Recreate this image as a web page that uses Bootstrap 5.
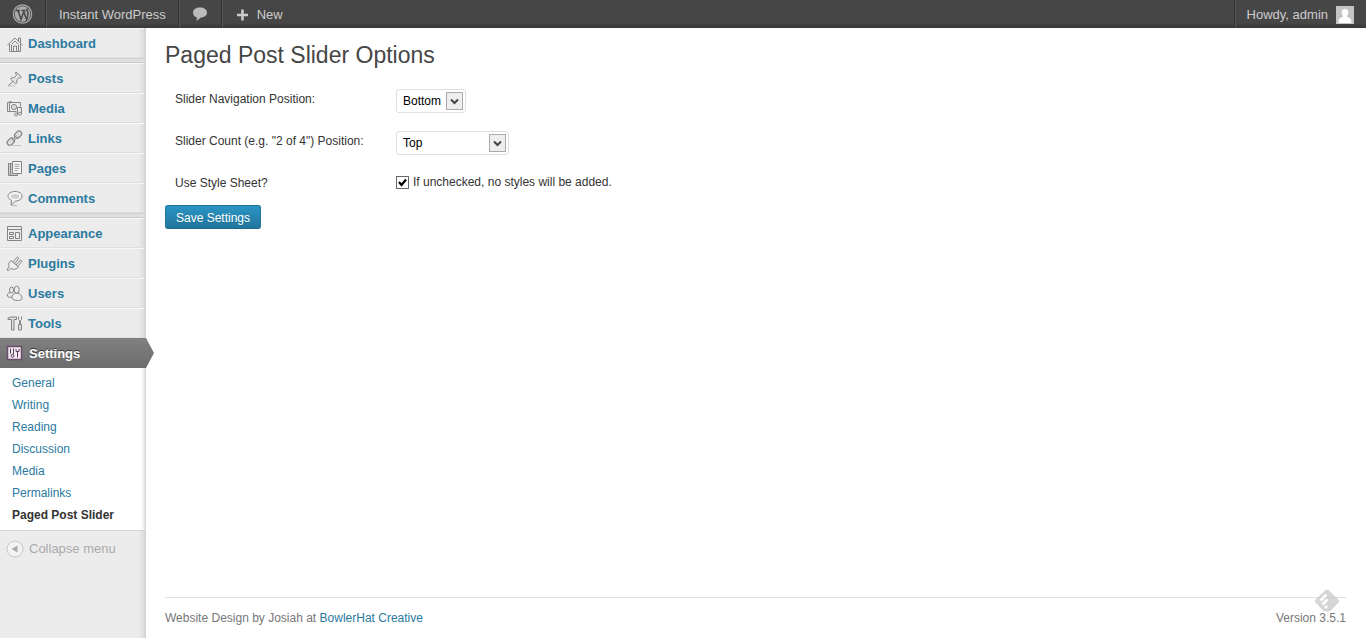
<!DOCTYPE html>
<html lang="en">
<head>
<meta charset="utf-8">
<meta name="viewport" content="width=device-width, initial-scale=1">
<title>Paged Post Slider Options</title>
<link href="https://cdn.jsdelivr.net/npm/bootstrap@5.3.0/dist/css/bootstrap.min.css" rel="stylesheet">
<style>
body { font-family: "Liberation Sans", Arial, sans-serif; font-size: 12px; line-height: 18px; color: #333; background: #fff; }
a { color: #2b7aa0; text-decoration: none; }
.admin-bar { height: 28px; font-size: 13px; line-height: 28px; background: linear-gradient(to top, #373737, #464646 5px); }
.admin-bar a { color: #ccc; height: 28px; padding: 1px 12px 0; border-right: 1px solid #333; box-shadow: 1px 0 #555; }
.admin-bar .bar-logo { width: 46px; padding-top: 0; }
.admin-bar .bar-talk { width: 42px; padding-top: 0; }
.admin-bar .bar-talk, .admin-bar .bar-site { margin-left: 1px; }
.admin-bar .bar-new { border: 0; box-shadow: none; margin-left: 2px; }
.admin-bar .bar-user { border: 0; border-left: 1px solid #333; box-shadow: inset 1px 0 #555; }
.side { width: 146px; background: linear-gradient(to left, #d0d0d0, #e0e0e0 3px, #ececec 8px); }
.menu-item { height: 30px; padding: 2px 0 0 6px; gap: 4px; font-size: 13px; font-weight: bold; border-top: 1px solid #f7f7f7; border-bottom: 1px solid #dfdfdf; margin-right: 2px; }
.menu-item svg { width: 18px; height: 18px; fill: none; stroke: #858585; stroke-width: 1; }
.menu-gap { height: 5px; background: #dfdfdf; border-top: 1px solid #d0d0d0; border-bottom: 1px solid #ccc; margin-right: 1px; }
.menu-item.current { position: relative; color: #fff; background: linear-gradient(#808080, #6d6d6d); border-color: #808080 #808080 #6d6d6d; border-bottom-color: #6d6d6d; text-shadow: 0 -1px 0 #333; gap: 5px; margin-right: 0; }
.menu-item.current::after { content: ""; position: absolute; left: 100%; top: -1px; width: 8px; height: 30px; background: linear-gradient(#808080, #6d6d6d); clip-path: polygon(0 0, 100% 50%, 0 100%); }
.submenu { padding: 4px 0; background: linear-gradient(to left, #d0d0d0, #ececec 2px, #fff 5px); border-bottom: 1px solid #d4d4d4; }
.submenu a { display: block; padding: 0 12px; line-height: 22px; }
.submenu a.active { color: #333; font-weight: bold; }
.collapse-btn { border: 0; background: none; color: #aaa; padding: 9px 6px; gap: 5px; font-size: 13px; }
main { padding: 0 20px 0 19px; }
h1 { font-size: 23px; line-height: 29px; font-weight: normal; color: #464646; padding-top: 13px; margin-bottom: 11px; }
.field-label { width: 231px; padding: 5px 10px; }
.field { min-height: 42px; }
.field:last-of-type { min-height: 40px; }
.drop { appearance: none; height: 24px; padding: 0 24px 0 6px; font-size: 12px; color: #000; border: 1px solid #dfdfdf; border-radius: 3px; background: #fff url("data:image/svg+xml,%3Csvg xmlns='http://www.w3.org/2000/svg' width='17' height='18'%3E%3Crect x='.5' y='.5' width='16' height='17' fill='%23eee' stroke='%23aaa'/%3E%3Cpath d='M5 7.500l3.500 3.500 3.500-3.500' fill='none' stroke='%23444' stroke-width='2'/%3E%3C/svg%3E") no-repeat right 2px center; }
.drop-short { width: 70px; }
.drop-long { width: 113px; }
.tick { appearance: none; width: 13px; height: 13px; margin: 0; border: 1px solid #666; background: #fff; }
.tick:checked { background: url("data:image/svg+xml,%3Csvg xmlns='http://www.w3.org/2000/svg' width='11' height='11'%3E%3Cpath d='M2 5l2.500 3L9 2.500' fill='none' stroke='%23000' stroke-width='2.200'/%3E%3C/svg%3E"); }
.save { --bs-btn-color: #fff; --bs-btn-padding-x: 10px; --bs-btn-padding-y: 1px; --bs-btn-font-size: 12px; --bs-btn-line-height: 22px; --bs-btn-border-radius: 3px; --bs-btn-hover-color: #fff; background: linear-gradient(#2a95c5, #21759b); border-color: #21759b #21759b #1e6a8d; text-shadow: 0 1px 0 rgba(0,0,0,.1); height: 24px; }
footer { border-top: 1px solid #dfdfdf; color: #777; padding: 11px 0; }
.reader-badge { position: fixed; right: 26px; bottom: 25px; opacity: .75; }
</style>
</head>
<body class="d-flex flex-column min-vh-100">
<nav class="admin-bar d-flex" aria-label="Toolbar">
  <a class="bar-logo d-flex align-items-center" href="#" aria-label="About WordPress">
    <svg width="21" height="20" viewBox="0 0 20 20" fill="none" stroke="#aaa"><circle cx="10" cy="10" r="9.200" stroke-width="1.200"/><circle cx="10" cy="10" r="7.800" fill="#aaa" stroke="none"/><path d="M3.500 6.500h4M5.500 6.500l3 9 2.500-7M9 6.500h4M11 6.500l3 9c1.200-3.500 2.500-6 .8-8.300-.7-1-.6-2 .4-2.600" stroke="#464646" stroke-width="1.500"/></svg>
  </a>
  <a class="bar-site d-flex align-items-center" href="#">Instant WordPress</a>
  <a class="bar-talk d-flex align-items-center justify-content-center" href="#" aria-label="Comments">
    <svg width="16" height="16" viewBox="0 0 16 16" fill="#bbb"><path d="M8 1.500c4 0 7 2 7 5s-3 5.200-6.500 5.200L4.500 15l.4-3.600C2.500 10.800 1 9 1 6.500c0-3 3-5 7-5z"/></svg>
  </a>
  <a class="bar-new d-flex align-items-center gap-2" href="#">
    <svg width="13" height="12" viewBox="0 0 13 12" stroke="#ccc" stroke-width="2.600"><path d="M1 6h11M6.500.5v11"/></svg>New
  </a>
  <a class="bar-user d-flex align-items-center ms-auto" href="#"><span class="me-1 pe-1">Howdy, admin</span>
    <svg width="18" height="18" viewBox="0 0 18 18"><path fill="#c4c4c4" d="M0 0h18v18H0z"/><path d="M9 3c2.500 0 3.500 1.700 3.300 3.800-.2 1.700-.9 2.600-1.300 3.200.1 1.500 4 1.500 4.300 4.500V17H2.700v-2.500C3 11.500 6.900 11.500 7 10c-.4-.6-1.100-1.500-1.300-3.200C5.500 4.700 6.500 3 9 3z" fill="#fff"/></svg>
  </a>
</nav>
<div class="d-flex flex-grow-1">
  <nav class="side flex-shrink-0" aria-label="Main menu">
    <a class="menu-item d-flex align-items-center" href="#"><svg viewBox="0 0 18 18"><path d="M1.500 10L9 3l7.500 7M12.500 6V3h2v5M3.500 9v7.500h11V9M5.500 9.500L9 6l3.500 3.500M7.500 16v-5h3v5M5.500 10v6M12.500 10v6"/></svg>Dashboard</a>
    <div class="menu-gap"></div>
    <a class="menu-item d-flex align-items-center" href="#"><svg viewBox="0 0 18 18"><path d="M10 2l5.500 5-1.200 1-1.300-.3-2.300 2.200.1 2.900-1.200 1L4.500 9l1-1.200 3-.3L10.500 5.200 9.500 3zM7 11.500L2 15.800" fill="#e5e5e5"/><path d="M2 16h7" stroke="#bbb"/></svg>Posts</a>
    <a class="menu-item d-flex align-items-center" href="#"><svg viewBox="0 0 18 18"><path d="M3.500 1.500h2M1.500 2.500h13v4M1.500 2.500v9h9M3.500 3v8"/><circle cx="8" cy="7" r="2.600" fill="#ddd"/><path d="M11.500 14.500v-7h4v6"/><circle cx="10" cy="14.500" r="1.500"/><circle cx="14" cy="13.700" r="1.500"/></svg>Media</a>
    <a class="menu-item d-flex align-items-center" href="#"><svg viewBox="0 0 18 18"><g fill="#e0e0e0" stroke-width="1.200"><rect x="8" y="2" width="8" height="5.400" rx="2.700" transform="rotate(-45 12 4.700)"/><rect x=".8" y="9" width="8" height="5.400" rx="2.700" transform="rotate(-45 4.800 11.700)"/></g><path d="M6.500 11l4.500-5" stroke-width="2.600"/><path d="M6.500 11l4.500-5" stroke="#ddd"/><path d="M4 15.500h11" stroke="#c5c5c5"/></svg>Links</a>
    <a class="menu-item d-flex align-items-center" href="#"><svg viewBox="0 0 18 18"><path d="M5.500 3.500h-3v12h9v-2M4.500 4v11" fill="#ccc"/><path d="M6.500 1.500h9v12h-9z" fill="#f4f4f4"/><path d="M8.500 4.500h5M8.500 6.500h5M8.500 8.500h5M8.500 10.500h3" stroke="#aaa"/></svg>Pages</a>
    <a class="menu-item d-flex align-items-center" href="#"><svg viewBox="0 0 18 18"><path d="M9 1.500c4 0 7 1.800 7 4.700s-3 4.800-6.500 4.800L5 15l.6-4.700C3.500 9.500 2 8 2 6.200 2 3.300 5 1.500 9 1.500z" fill="#f5f5f5"/><path d="M4.500 6.500c.5-3.300 8.500-3.300 9 0s-8.500 3-9 0z" fill="#d0d0d0" stroke="none"/><path d="M5 15.500h6" stroke="#bbb"/></svg>Comments</a>
    <div class="menu-gap"></div>
    <a class="menu-item d-flex align-items-center" href="#"><svg viewBox="0 0 18 18"><path d="M1.500 1.500h14v14h-14zM2 4.500h13M9.500 7.500h4v6h-4zM3.500 7.500h4v2h-4zM3.500 11.500h4v2h-4z"/></svg>Appearance</a>
    <a class="menu-item d-flex align-items-center" href="#"><svg viewBox="0 0 18 18"><path d="M5 5.500l7.500 6.500c-2 2.500-5.500 3-7.500 1.300L2.500 15.500 1 15l2-3.500C2.300 9 3 7 5 5.500zM6.800 7l4.500-5 1.500 1-4 5.500M10 10l4.500-5 1.500 1.200-4 5" fill="#eee"/></svg>Plugins</a>
    <a class="menu-item d-flex align-items-center" href="#"><svg viewBox="0 0 18 18"><ellipse cx="5.500" cy="5" rx="2" ry="3"/><path d="M4 7.500C2 8 1 9.500 1.500 11s2.500 1.700 4.500 1"/><ellipse cx="10.700" cy="4.700" rx="2.500" ry="3.600" fill="#eee"/><path d="M9.500 8.200C7 9 5.500 10.700 6 12.700c.7 2.300 3 2.800 5.500 2.800s5-.7 4.500-2.800c-.4-2-1.700-3.700-4-4.500z" fill="#eee"/></svg>Users</a>
    <a class="menu-item d-flex align-items-center" href="#"><svg viewBox="0 0 18 18"><path d="M2 4.500V3l3-1h5.500v2.500H8V15H5.500V4.500zM12.500 1.500v3l1 1V9M15.500 1.500v3l-1 1V9M12.500 9.500h3v5.500h-3z" fill="#ddd"/></svg>Tools</a>
    <a class="menu-item current d-flex align-items-center" href="#" aria-current="true"><svg viewBox="0 0 18 18"><path d="M1.500 1.500h14v13h-14z" fill="#f3e9f2" stroke="#6b4d6b" stroke-width="1.500"/><path d="M4.500 3.500v5M7.500 3.500v6M10 4v2.500h3V4M11.500 6.500v6" stroke="#59405a"/><circle cx="6.500" cy="10.800" r="1.400" stroke="#59405a"/></svg>Settings</a>
    <div class="submenu">
      <a href="#">General</a>
      <a href="#">Writing</a>
      <a href="#">Reading</a>
      <a href="#">Discussion</a>
      <a href="#">Media</a>
      <a href="#">Permalinks</a>
      <a href="#" class="active" aria-current="page">Paged Post Slider</a>
    </div>
    <button type="button" class="collapse-btn d-flex align-items-center"><svg width="18" height="18" viewBox="0 0 18 18"><circle cx="9" cy="9" r="8" fill="#f3f3f3" stroke="#c8c8c8"/><path d="M11.500 5.500v7l-6-3.500z" fill="#aaa"/></svg>Collapse menu</button>
  </nav>
  <main class="flex-grow-1 d-flex flex-column">
    <h1>Paged Post Slider Options</h1>
    <form class="flex-grow-1">
      <div class="field d-flex align-items-start pt-1">
        <label class="field-label" for="nav-position">Slider Navigation Position:</label>
        <select class="drop drop-short mt-1" id="nav-position"><option>Bottom</option><option>Top</option></select>
      </div>
      <div class="field d-flex align-items-start pt-1">
        <label class="field-label" for="count-position">Slider Count (e.g. "2 of 4") Position:</label>
        <select class="drop drop-long mt-1" id="count-position"><option>Top</option><option>Bottom</option><option>Do not display</option></select>
      </div>
      <div class="field d-flex align-items-start pt-1">
        <label class="field-label" for="use-styles">Use Style Sheet?</label>
        <div class="d-flex align-items-center pt-1"><input class="tick" type="checkbox" id="use-styles" checked><label class="ps-1" for="use-styles">If unchecked, no styles will be added.</label></div>
      </div>
      <button type="submit" class="btn save">Save Settings</button>
    </form>
    <footer class="d-flex justify-content-between"><span>Website Design by Josiah at <a href="#">BowlerHat Creative</a></span><span>Version 3.5.1</span></footer>
  </main>
</div>
<svg class="reader-badge" width="26" height="24" viewBox="0 0 26 24" aria-hidden="true"><path d="M11 1.500q2-2 4 0l9.500 9q1.500 1.500 0 3L17 21.500q-1 1-2.500 1h-3q-1.500 0-2.500-1L1.500 13.500q-1.500-1.500 0-3z" fill="#c8c8c8"/><path d="M6.500 11.500l6-6M8.500 15.500l5-5M11 19l2-2" stroke="#fff" stroke-width="2.500"/></svg>
<script src="https://cdn.jsdelivr.net/npm/bootstrap@5.3.0/dist/js/bootstrap.bundle.min.js"></script>
</body>
</html>
